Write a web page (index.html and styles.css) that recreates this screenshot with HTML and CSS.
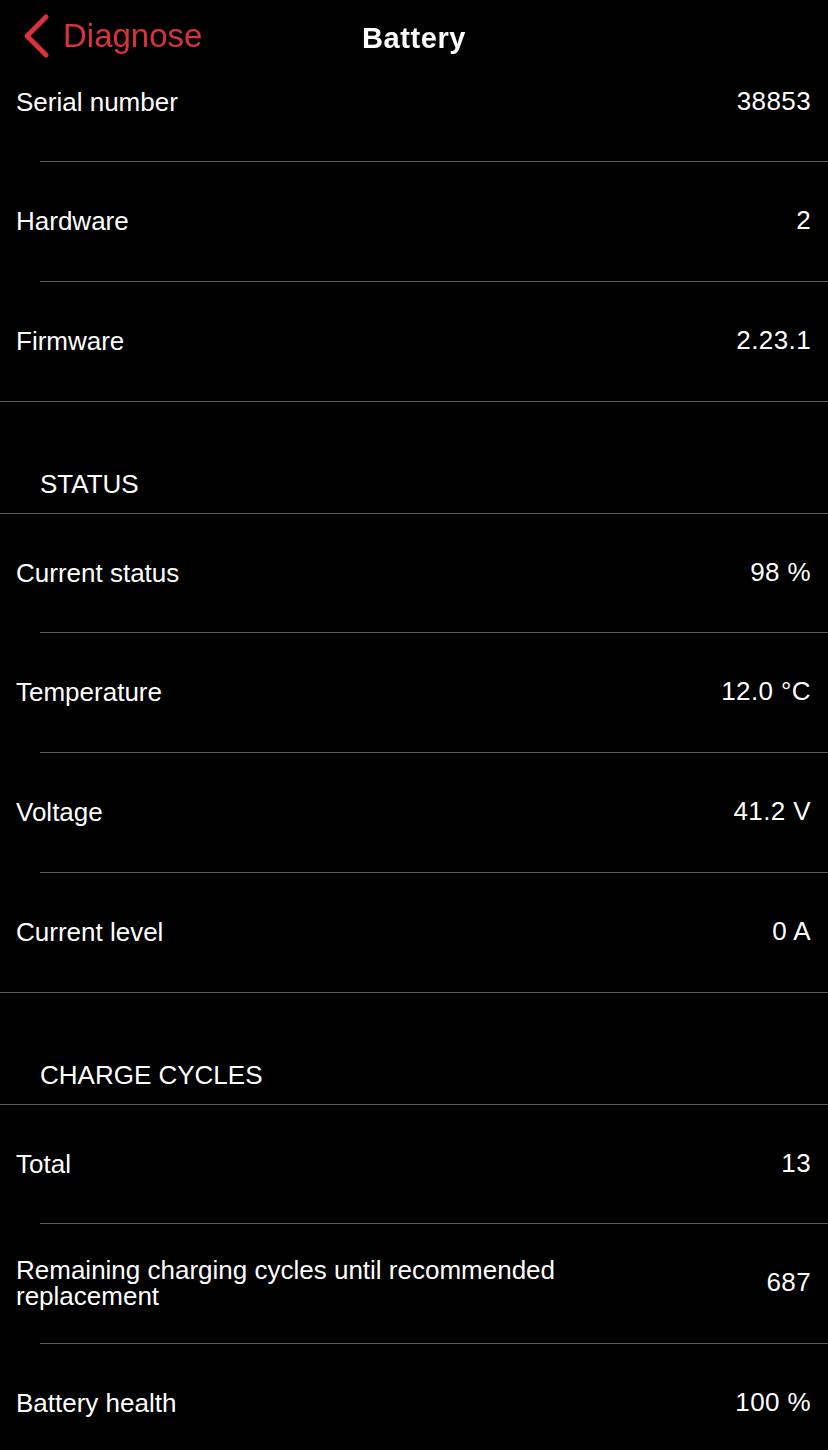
FILE: index.html
```html
<!DOCTYPE html>
<html lang="en">
  <head>
    <meta charset="UTF-8" />
    <meta name="viewport" content="width=device-width, initial-scale=1.0" />
    <title>Battery</title>
    <link rel="stylesheet" href="styles.css">
  </head>
  <body>
    <header class="nav-bar">
      <a class="back-link" href="#">
        <svg class="back-icon" width="30" height="46" viewBox="0 0 30 46">
          <polyline points="24,4 5,23 24,42" />
        </svg>
        <span>Diagnose</span>
      </a>
      <h1 class="nav-title">Battery</h1>
    </header>

    <main class="list">
      <section class="group">
        <div class="row"><span class="label">Serial number</span><span class="value">38853</span></div>
        <div class="row"><span class="label">Hardware</span><span class="value">2</span></div>
        <div class="row"><span class="label">Firmware</span><span class="value">2.23.1</span></div>
      </section>

      <h2 class="group-title">STATUS</h2>
      <section class="group">
        <div class="row"><span class="label">Current status</span><span class="value">98 %</span></div>
        <div class="row"><span class="label">Temperature</span><span class="value">12.0 °C</span></div>
        <div class="row"><span class="label">Voltage</span><span class="value">41.2 V</span></div>
        <div class="row"><span class="label">Current level</span><span class="value">0 A</span></div>
      </section>

      <h2 class="group-title">CHARGE CYCLES</h2>
      <section class="group">
        <div class="row"><span class="label">Total</span><span class="value">13</span></div>
        <div class="row"><span class="label">Remaining charging cycles until recommended replacement</span><span class="value">687</span></div>
        <div class="row"><span class="label">Battery health</span><span class="value">100 %</span></div>
      </section>
    </main>
  </body>
</html>
```

FILE: styles.css
```css
/* General styles */
body {
  margin: 0;
  background-color: #000;
  color: #fff;
  font-family: "Liberation Sans", Arial, sans-serif;
}

/* Navigation bar, laid over the scrolled list */
.nav-bar {
  position: fixed;
  top: 0;
  left: 0;
  right: 0;
  height: 76px;
  display: flex;
  align-items: center;
  justify-content: center;
  z-index: 1;
}

.back-link {
  position: absolute;
  left: 22px;
  top: 13px;
  display: flex;
  align-items: center;
  gap: 11px;
  color: #d8323b;
  text-decoration: none;
  font-size: 33px;
}

.back-icon polyline {
  fill: none;
  stroke: #d8323b;
  stroke-width: 5;
  stroke-linecap: round;
  stroke-linejoin: round;
}

.nav-title {
  margin: 0;
  font-size: 29px;
  font-weight: bold;
  letter-spacing: 0.6px;
}

/* List */
.list {
  padding-top: 43px;
}

.group {
  border-bottom: 1px solid #5c5c5c;
}

.row {
  display: flex;
  align-items: center;
  justify-content: space-between;
  gap: 20px;
  height: 120px;
  box-sizing: border-box;
  padding: 0 17px 3px 16px;
  font-size: 26px;
  background: linear-gradient(#5c5c5c, #5c5c5c) no-repeat 40px 100% / calc(100% - 40px) 1px;
}

.row:first-child {
  height: 119px;
  padding-bottom: 2px;
}

.row:last-child {
  background: none;
  padding-bottom: 2px;
  height: 119px;
}

.label {
  max-width: 560px;
  line-height: 1;
}

.value {
  white-space: nowrap;
  letter-spacing: 0.4px;
}

.group-title {
  margin: 0;
  height: 112px;
  box-sizing: border-box;
  padding: 0 40px 13px;
  display: flex;
  align-items: flex-end;
  font-size: 26px;
  font-weight: normal;
  border-bottom: 1px solid #5c5c5c;
}
```
